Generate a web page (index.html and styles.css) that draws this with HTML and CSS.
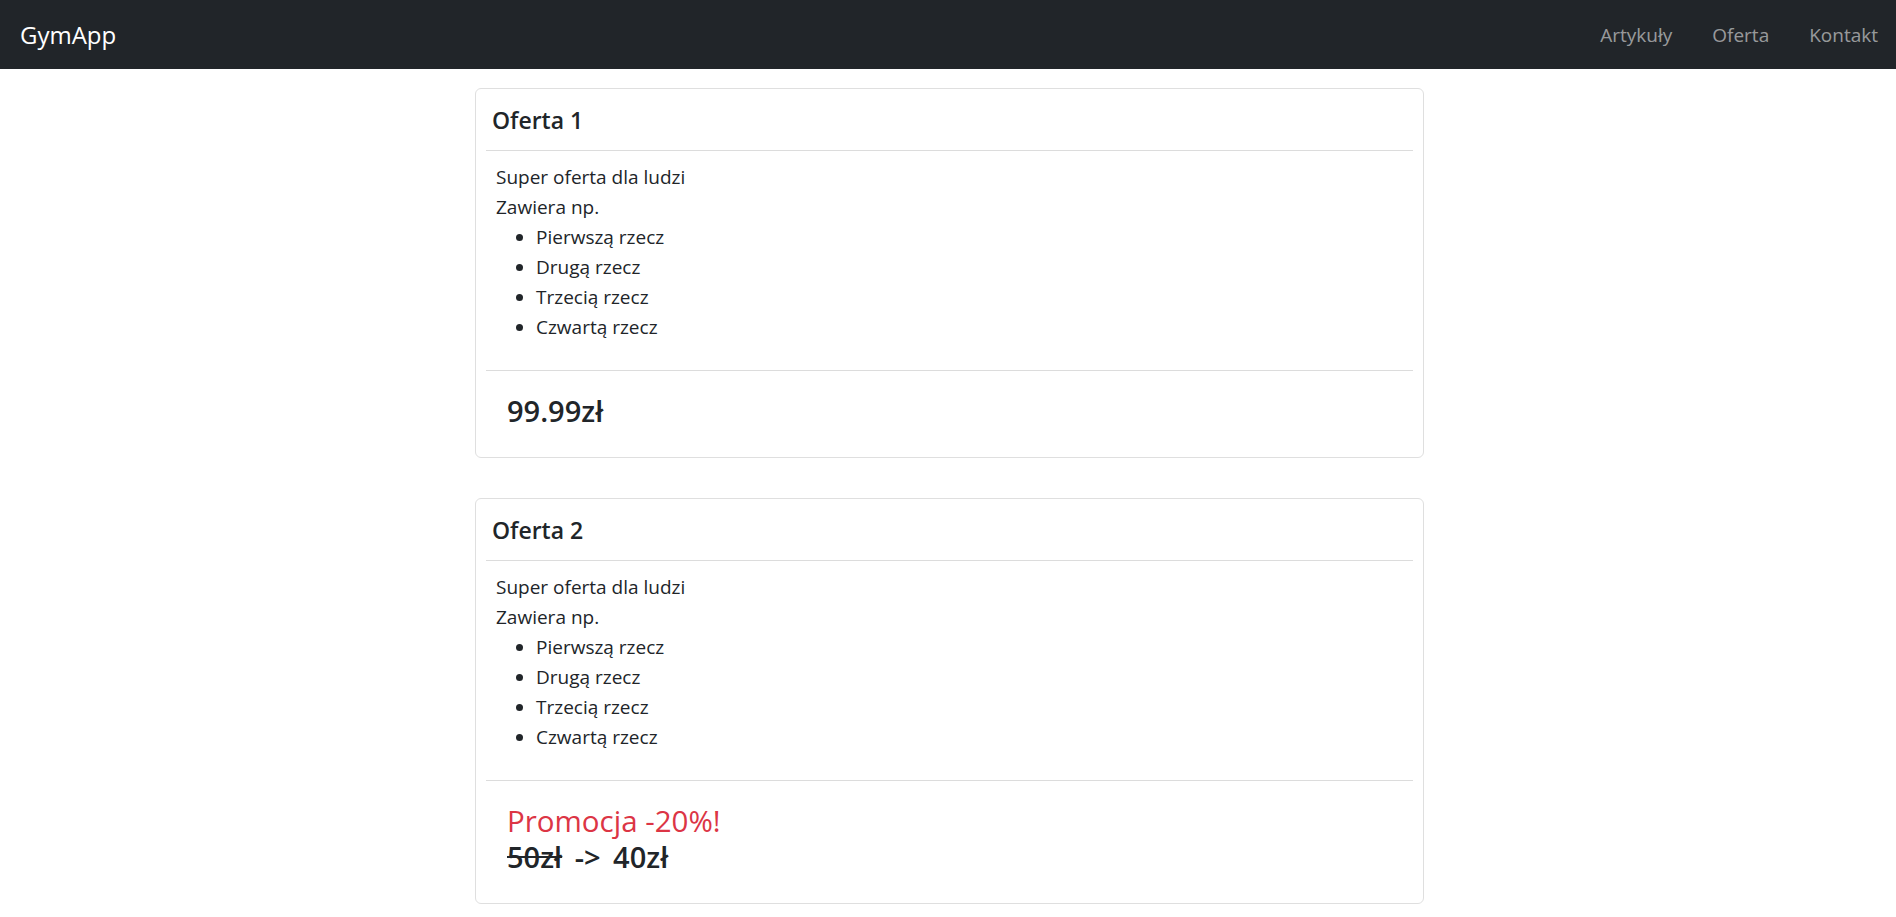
FILE: index.html
```html
<!DOCTYPE html>
<html lang="pl">
<head>
<meta charset="utf-8">
<title>GymApp</title>
<link rel="stylesheet" href="styles.css">
</head>
<body>
<nav class="navbar">
  <a class="brand" href="#">GymApp</a>
  <ul class="nav">
    <li><a href="#">Artykuły</a></li>
    <li><a href="#">Oferta</a></li>
    <li><a href="#">Kontakt</a></li>
  </ul>
</nav>
<main class="content">
  <section class="card">
    <h5 class="card-title">Oferta 1</h5>
    <hr class="rule">
    <div class="card-text">
      <p>Super oferta dla ludzi</p>
      <p>Zawiera np.</p>
      <ul class="items">
        <li>Pierwszą rzecz</li>
        <li>Drugą rzecz</li>
        <li>Trzecią rzecz</li>
        <li>Czwartą rzecz</li>
      </ul>
    </div>
    <hr class="rule">
    <div class="price">
      <h4 class="amount">99.99zł</h4>
    </div>
  </section>
  <section class="card">
    <h5 class="card-title">Oferta 2</h5>
    <hr class="rule">
    <div class="card-text">
      <p>Super oferta dla ludzi</p>
      <p>Zawiera np.</p>
      <ul class="items">
        <li>Pierwszą rzecz</li>
        <li>Drugą rzecz</li>
        <li>Trzecią rzecz</li>
        <li>Czwartą rzecz</li>
      </ul>
    </div>
    <hr class="rule">
    <div class="price">
      <h4 class="promo">Promocja -20%!</h4>
      <h4 class="amount"><s>50zł</s> -&gt; 40zł</h4>
    </div>
  </section>
</main>
</body>
</html>
```
FILE: styles.css
```css
* { box-sizing: border-box; }
html, body { margin: 0; padding: 0; }
body {
  font-family: "Open Sans", "Noto Sans", sans-serif;
  color: #212529;
  background: #fff;
  font-size: 19px;
  line-height: 30px;
}
.navbar {
  height: 69px;
  background: #212529;
  display: flex;
  align-items: center;
  justify-content: space-between;
  padding: 0 18px 0 20px;
}
.brand {
  color: #fff;
  text-decoration: none;
  font-size: 24px;
  line-height: 30px;
}
.nav {
  list-style: none;
  margin: 0;
  padding: 0;
  display: flex;
  gap: 40px;
}
.nav a {
  color: rgba(255,255,255,.55);
  text-decoration: none;
  font-size: 19px;
}
.content {
  width: 949px;
  margin: 19px 0 0 475px;
  display: flex;
  flex-direction: column;
  gap: 40px;
}
.card {
  border: 1px solid #dfdfdf;
  border-radius: 6px;
  padding: 16px 10px 28px 10px;
}
.card-title {
  margin: 0 0 0 6px;
  font-size: 23px;
  line-height: 30px;
  font-weight: 600;
}
.rule {
  border: 0;
  border-top: 1px solid #dcdcdc;
  margin: 15px 0 0 0;
}
.card-text {
  padding: 11px 0 0 10px;
  margin-bottom: 28px;
}
.card-text p { margin: 0; }
.items {
  margin: 0;
  padding-left: 40px;
}
.price {
  padding: 22px 0 0 21px;
}
.price h4 {
  margin: 0;
  line-height: 36px;
}
.amount { font-weight: 600; font-size: 29px; word-spacing: 5px; }
.promo { font-weight: 400; font-size: 29.5px; color: #dc3545; }
```
